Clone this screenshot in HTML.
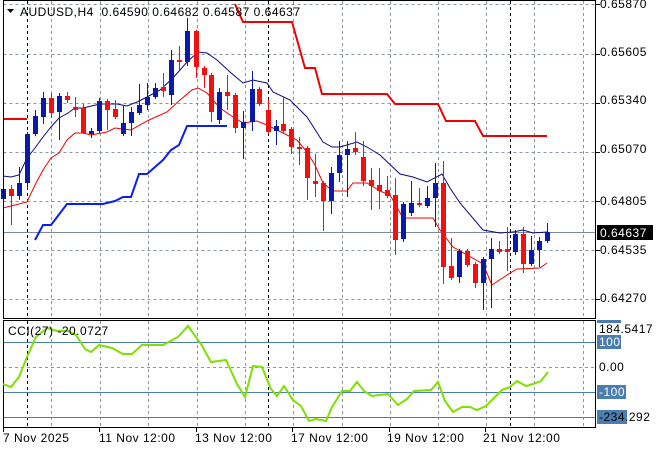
<!DOCTYPE html>
<html><head><meta charset="utf-8"><style>
html,body{margin:0;padding:0;background:#fff;}
svg{display:block;font-family:"Liberation Sans",sans-serif;}
.g{stroke:#8a96a4;stroke-width:1;stroke-dasharray:3,3;fill:none}
.k{stroke:#000;stroke-width:1;stroke-dasharray:3,3;fill:none}
.w{stroke-width:1;fill:none}
.b{fill:#0a1aa8}.r{fill:#f01010}
.bw{stroke:#0a1aa8}.rw{stroke:#f01010}
text{font-size:12px;letter-spacing:0.5px;fill:#000}
</style></head><body>
<svg width="660" height="450" viewBox="0 0 660 450" xmlns="http://www.w3.org/2000/svg">
<rect width="660" height="450" fill="#fff"/>
<g class="g">
<path d="M3.5 4.5H595M3.5 54.5H595M3.5 103.5H595M3.5 152.5H595M3.5 201.5H595M3.5 250.5H595M3.5 299.5H595"/>
<path d="M51.5 1V318M100.5 1V318M148.5 1V318M197.5 1V318M245.5 1V318M293.5 1V318M342.5 1V318M390.5 1V318M438.5 1V318M486.5 1V318M534.5 1V318M583.5 1V318"/>
<path d="M51.5 321V427M100.5 321V427M148.5 321V427M197.5 321V427M245.5 321V427M293.5 321V427M342.5 321V427M390.5 321V427M438.5 321V427M486.5 321V427M534.5 321V427M583.5 321V427M3 367.5H595"/>
</g>
<g class="k"><path d="M27.5 1V318M268.5 1V318M510.5 1V318M27.5 321V427M268.5 321V427M510.5 321V427"/></g>
<path d="M3 232.5H595" stroke="#7d8a98" stroke-width="1"/>
<polyline fill="none" stroke="#f00000" stroke-width="2" points="3,119 27,119"/>
<polyline fill="none" stroke="#f00000" stroke-width="2" points="235,4 243,22 292,22 305,68 315,68 322,94 387,94 395,104 438,104 446,121 475,121 483,136 547,136"/>
<polyline fill="none" stroke="#0a1ef0" stroke-width="2" points="35,240 43,225 51,225 67,204 103,204 115,201 123,197 131,197 139,174 147,174 155,167 163,160 171,150 179,145 187,126 227,126"/>
<polyline fill="none" stroke="#0a0a80" stroke-width="1" points="3,176 11,177 19,175 27,158 35,148 43,137 51,127 59,118 68,113 75,108 83,108 100,104 117,104 127,106 137,102 147,97 160,90 173,78 187,62 198,52 207,53 217,60 230,72 243,83 253,80 267,83 273,92 290,100 307,117 323,142 332,147 340,147 357,142 367,147 380,155 400,174 413,177 427,182 442,174 450,188 460,203 483,230 500,233 513,232 523,230 533,233 547,232"/>
<polyline fill="none" stroke="#f00000" stroke-width="1" points="3,208 27,202 35,185 43,170 51,158 59,153 67,140 75,133 83,133 91,135 107,132 115,128 131,130 147,121 167,112 180,100 192,90 198,88 207,93 220,108 233,117 243,123 257,121 267,125 277,130 297,140 307,152 315,165 323,183 333,191 347,191 353,183 367,183 380,191 390,195 403,218 433,218 440,230 453,247 483,264 492,285 507,275 517,269 540,268 547,263"/>
<g>
<path class="w bw" d="M3.5 182V208M19.5 167V200M27.5 132V190M35.5 110V136M43.5 92V124M59.5 93V140M91.5 128V138M99.5 98V133M123.5 106V136M131.5 107V136M139.5 84V115M147.5 83V110M155.5 83V99M171.5 50V105M187.5 18V66M219.5 88V124M243.5 111V159M252.5 71V131M276.5 120V145M331.5 167V214M339.5 141V182M347.5 141V197M403.5 202V242M411.5 181V216M427.5 186V208M435.5 163V227M459.5 249V283M483.5 257V310M491.5 238V308M515.5 230V255M531.5 236V266M539.5 237V267M547.5 223V243"/>
<path class="w rw" d="M11.5 185V225M51.5 93V118M67.5 92V103M75.5 97V117M83.5 104V134M107.5 99V130M115.5 100V119M163.5 73V97M179.5 46V70M196.5 30V78M204.5 66V88M211.5 73V122M227.5 75V110M235.5 93V133M259.5 87V106M268.5 100V134M283.5 97V133M291.5 127V154M299.5 137V165M307.5 146V200M315.5 154V197M323.5 181V231M355.5 132V155M363.5 141V186M371.5 168V210M379.5 168V209M387.5 176V198M395.5 178V255M419.5 188V207M443.5 161V284M451.5 238V280M467.5 249V267M475.5 262V288M499.5 241V254M507.5 227V271M523.5 227V273"/>
<g class="b">
<rect x="1" y="189" width="5" height="10"/><rect x="17" y="183" width="5" height="13"/><rect x="25" y="134" width="5" height="49"/><rect x="33" y="116" width="5" height="18"/><rect x="41" y="98" width="5" height="19"/><rect x="57" y="96" width="5" height="16"/><rect x="89" y="131" width="5" height="3"/><rect x="97" y="101" width="5" height="30"/><rect x="121" y="123" width="5" height="11"/><rect x="129" y="112" width="5" height="11"/><rect x="137" y="105" width="5" height="8"/><rect x="145" y="97" width="5" height="8"/><rect x="153" y="88" width="5" height="9"/><rect x="169" y="60" width="5" height="35"/><rect x="185" y="31" width="5" height="31"/><rect x="217" y="92" width="5" height="28"/><rect x="241" y="122" width="5" height="6"/><rect x="250" y="89" width="5" height="33"/><rect x="274" y="126" width="5" height="5"/><rect x="329" y="173" width="5" height="28"/><rect x="337" y="155" width="5" height="18"/><rect x="345" y="149" width="5" height="6"/><rect x="401" y="204" width="5" height="35"/><rect x="409" y="203" width="5" height="10"/><rect x="425" y="198" width="5" height="8"/><rect x="433" y="183" width="5" height="15"/><rect x="457" y="251" width="5" height="26"/><rect x="481" y="259" width="5" height="24"/><rect x="489" y="249" width="5" height="10"/><rect x="513" y="234" width="5" height="18"/><rect x="529" y="250" width="5" height="14"/><rect x="537" y="241" width="5" height="9"/><rect x="545" y="232" width="5" height="9"/>
</g>
<g class="r">
<rect x="9" y="189" width="5" height="7"/><rect x="49" y="98" width="5" height="15"/><rect x="65" y="96" width="5" height="4"/><rect x="73" y="107" width="5" height="3"/><rect x="81" y="108" width="5" height="25"/><rect x="105" y="101" width="5" height="9"/><rect x="113" y="109" width="5" height="8"/><rect x="161" y="87" width="5" height="4"/><rect x="177" y="60" width="5" height="2"/><rect x="194" y="31" width="5" height="36"/><rect x="202" y="68" width="5" height="7"/><rect x="209" y="75" width="5" height="37"/><rect x="225" y="92" width="5" height="4"/><rect x="233" y="95" width="5" height="33"/><rect x="257" y="89" width="5" height="15"/><rect x="266" y="110" width="5" height="22"/><rect x="281" y="124" width="5" height="7"/><rect x="289" y="129" width="5" height="18"/><rect x="297" y="147" width="5" height="2"/><rect x="305" y="148" width="5" height="30"/><rect x="313" y="181" width="5" height="3"/><rect x="321" y="183" width="5" height="18"/><rect x="353" y="148" width="5" height="4"/><rect x="361" y="157" width="5" height="24"/><rect x="369" y="180" width="5" height="6"/><rect x="377" y="185" width="5" height="6"/><rect x="385" y="190" width="5" height="6"/><rect x="393" y="195" width="5" height="45"/><rect x="417" y="203" width="5" height="2"/><rect x="441" y="183" width="5" height="84"/><rect x="449" y="266" width="5" height="12"/><rect x="465" y="251" width="5" height="14"/><rect x="473" y="264" width="5" height="19"/><rect x="497" y="249" width="5" height="3"/><rect x="505" y="249" width="5" height="3"/><rect x="521" y="234" width="5" height="30"/>
</g>
</g>
<rect x="3.5" y="0.5" width="592" height="318" fill="none" stroke="#000"/>
<rect x="3.5" y="320.5" width="592" height="107" fill="none" stroke="#000"/>
<path d="M7 9H14L10.5 13Z" fill="#000"/>
<text x="20" y="16" xml:space="preserve">AUDUSD,H4  0.64590 0.64682 0.64587 0.64637</text>
<g>
<text x="600" y="8">0.65870</text>
<text x="600" y="56">0.65605</text>
<text x="600" y="104">0.65340</text>
<text x="600" y="153">0.65070</text>
<text x="600" y="205">0.64805</text>
<text x="600" y="254">0.64535</text>
<text x="600" y="302">0.64270</text>
</g>
<path d="M596 4.5H600M596 54.5H600M596 103.5H600M596 152.5H600M596 201.5H600M596 250.5H600M596 299.5H600" stroke="#000"/>
<rect x="597" y="225" width="56" height="15" fill="#000"/>
<text x="600" y="237" style="fill:#fff">0.64637</text>
<path d="M4 342.5H595M4 392.5H595M4 417.5H595" stroke="#4a7eb0" stroke-width="1"/>
<polyline fill="none" stroke="#7ee000" stroke-width="2" points="3,384 11,387 19,377 27,357 36,337 47,328 57,331 68,331 76,335 85,349 91,352 99,345 112,348 123,354 132,354 142,345 163,345 178,337 188,326 201,344 211,362 226,360 237,384 245,397 253,366 262,367 271,389 277,396 284,386 293,400 301,406 309,421 316,419 326,421 332,407 342,391 350,391 357,382 364,391 372,396 388,394 398,405 407,399 414,391 431,390 438,382 445,401 453,412 462,407 470,407 477,410 486,406 502,390 510,387 517,381 526,386 533,384 541,381 548,372"/>
<text x="8" y="335">CCI(27) -20.0727</text>
<rect x="597" y="320" width="24" height="3" fill="#4a7eb0"/>
<text x="599" y="333">184.5417</text>
<rect x="597" y="335" width="24" height="14" fill="#4a7eb0"/>
<text x="599" y="346" style="fill:#fff">100</text>
<text x="599" y="371">0.00</text>
<rect x="597" y="385" width="29" height="14" fill="#4a7eb0"/>
<text x="599" y="396" style="fill:#fff">-100</text>
<rect x="597" y="410" width="30" height="14" fill="#4a7eb0"/>
<text x="599" y="421">-234.292</text>
<path d="M3.5 428V432M99.5 428V432M196.5 428V432M292.5 428V432M389.5 428V432M485.5 428V432" stroke="#000"/>
<text x="3" y="442">7 Nov 2025</text>
<text x="99" y="442">11 Nov 12:00</text>
<text x="195" y="442">13 Nov 12:00</text>
<text x="291" y="442">17 Nov 12:00</text>
<text x="387" y="442">19 Nov 12:00</text>
<text x="483" y="442">21 Nov 12:00</text>
</svg>
</body></html>
